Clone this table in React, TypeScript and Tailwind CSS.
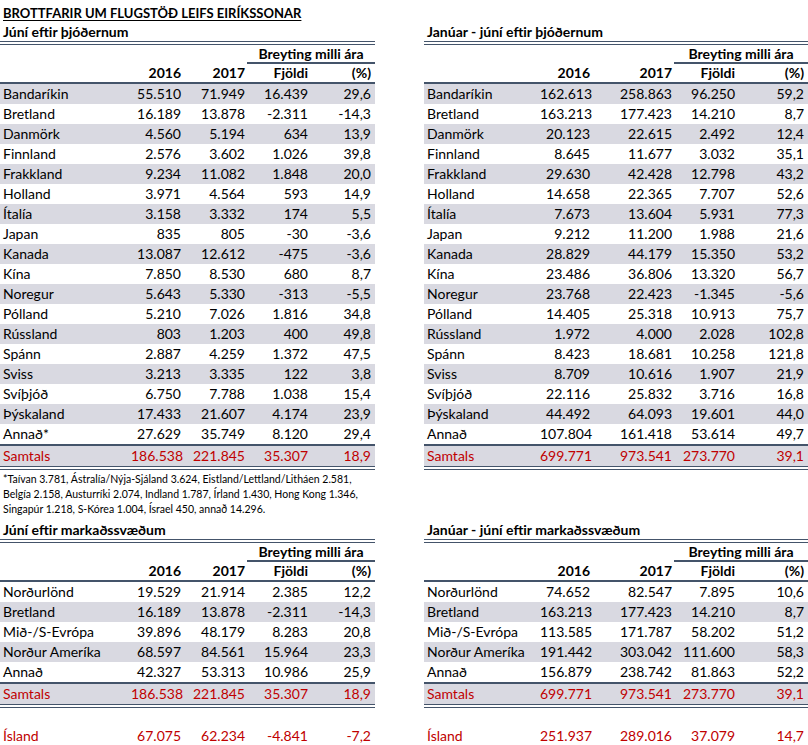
import React from "react";

type Row = [string, string, string, string, string];

type Cfg = {
  width: string;
  label: string;
  c1: string;
  c2: string;
  c3: string;
  c4: string;
  brey: string;
};

const LEFT: Cfg = {
  width: "w-[375px]",
  label: "w-[131px] pl-[3px]",
  c1: "w-[50px]",
  c2: "w-[64px]",
  c3: "w-[63px]",
  c4: "w-[63px]",
  brey: "ml-[247px] w-[128px]",
};

const RIGHT: Cfg = {
  width: "w-[384px]",
  label: "w-[116px] pl-[3px]",
  c1: "w-[50px]",
  c2: "w-[82px]",
  c3: "w-[63px]",
  c4: "w-[69px]",
  brey: "ml-[250px] w-[134px]",
};

const topLeft: Row[] = [
  ["Bandaríkin", "55.510", "71.949", "16.439", "29,6"],
  ["Bretland", "16.189", "13.878", "-2.311", "-14,3"],
  ["Danmörk", "4.560", "5.194", "634", "13,9"],
  ["Finnland", "2.576", "3.602", "1.026", "39,8"],
  ["Frakkland", "9.234", "11.082", "1.848", "20,0"],
  ["Holland", "3.971", "4.564", "593", "14,9"],
  ["Ítalía", "3.158", "3.332", "174", "5,5"],
  ["Japan", "835", "805", "-30", "-3,6"],
  ["Kanada", "13.087", "12.612", "-475", "-3,6"],
  ["Kína", "7.850", "8.530", "680", "8,7"],
  ["Noregur", "5.643", "5.330", "-313", "-5,5"],
  ["Pólland", "5.210", "7.026", "1.816", "34,8"],
  ["Rússland", "803", "1.203", "400", "49,8"],
  ["Spánn", "2.887", "4.259", "1.372", "47,5"],
  ["Sviss", "3.213", "3.335", "122", "3,8"],
  ["Svíþjóð", "6.750", "7.788", "1.038", "15,4"],
  ["Þýskaland", "17.433", "21.607", "4.174", "23,9"],
  ["Annað*", "27.629", "35.749", "8.120", "29,4"],
];

const topRight: Row[] = [
  ["Bandaríkin", "162.613", "258.863", "96.250", "59,2"],
  ["Bretland", "163.213", "177.423", "14.210", "8,7"],
  ["Danmörk", "20.123", "22.615", "2.492", "12,4"],
  ["Finnland", "8.645", "11.677", "3.032", "35,1"],
  ["Frakkland", "29.630", "42.428", "12.798", "43,2"],
  ["Holland", "14.658", "22.365", "7.707", "52,6"],
  ["Ítalía", "7.673", "13.604", "5.931", "77,3"],
  ["Japan", "9.212", "11.200", "1.988", "21,6"],
  ["Kanada", "28.829", "44.179", "15.350", "53,2"],
  ["Kína", "23.486", "36.806", "13.320", "56,7"],
  ["Noregur", "23.768", "22.423", "-1.345", "-5,6"],
  ["Pólland", "14.405", "25.318", "10.913", "75,7"],
  ["Rússland", "1.972", "4.000", "2.028", "102,8"],
  ["Spánn", "8.423", "18.681", "10.258", "121,8"],
  ["Sviss", "8.709", "10.616", "1.907", "21,9"],
  ["Svíþjóð", "22.116", "25.832", "3.716", "16,8"],
  ["Þýskaland", "44.492", "64.093", "19.601", "44,0"],
  ["Annað", "107.804", "161.418", "53.614", "49,7"],
];

const botLeft: Row[] = [
  ["Norðurlönd", "19.529", "21.914", "2.385", "12,2"],
  ["Bretland", "16.189", "13.878", "-2.311", "-14,3"],
  ["Mið-/S-Evrópa", "39.896", "48.179", "8.283", "20,8"],
  ["Norður Ameríka", "68.597", "84.561", "15.964", "23,3"],
  ["Annað", "42.327", "53.313", "10.986", "25,9"],
];

const botRight: Row[] = [
  ["Norðurlönd", "74.652", "82.547", "7.895", "10,6"],
  ["Bretland", "163.213", "177.423", "14.210", "8,7"],
  ["Mið-/S-Evrópa", "113.585", "171.787", "58.202", "51,2"],
  ["Norður Ameríka", "191.442", "303.042", "111.600", "58,3"],
  ["Annað", "156.879", "238.742", "81.863", "52,2"],
];

function DataRow({
  cfg,
  row,
  shaded,
  red,
  extra,
}: {
  cfg: Cfg;
  row: Row;
  shaded?: boolean;
  red?: boolean;
  extra?: string;
}) {
  return (
    <div
      className={`flex h-[20px] items-center leading-[20px] whitespace-nowrap ${
        shaded ? "bg-[#d9d9e1]" : ""
      } ${red ? "text-[#c00000]" : "text-black"} ${extra ?? ""}`}
    >
      <div className={cfg.label}>{row[0]}</div>
      <div className={`${cfg.c1} text-right`}>{row[1]}</div>
      <div className={`${cfg.c2} text-right`}>{row[2]}</div>
      <div className={`${cfg.c3} text-right`}>{row[3]}</div>
      <div className={`${cfg.c4} text-right`}>{row[4]}</div>
    </div>
  );
}

function DoubleLine() {
  return (
    <div className="flex flex-col gap-[2px]">
      <div className="h-px bg-[#44546a]" />
      <div className="h-px bg-[#44546a]" />
    </div>
  );
}

function Table({
  cfg,
  title,
  rows,
  total,
  shadeOdd,
}: {
  cfg: Cfg;
  title: string;
  rows: Row[];
  total: Row;
  shadeOdd: boolean;
}) {
  return (
    <div className={cfg.width}>
      <div className="h-[18px] pl-[3px] text-[14px] font-bold leading-[18px]">{title}</div>
      <DoubleLine />
      <div className="flex h-[19px] items-end">
        <div
          className={`${cfg.brey} h-[19px] border-b-2 border-[#44546a] text-center text-[14px] font-bold leading-[17px]`}
        >
          Breyting milli ára
        </div>
      </div>
      <div className="flex h-[20px] items-center border-b-2 border-[#44546a] text-[14px] font-bold leading-[18px]">
        <div className={cfg.label} />
        <div className={`${cfg.c1} text-right`}>2016</div>
        <div className={`${cfg.c2} text-right`}>2017</div>
        <div className={`${cfg.c3} text-right`}>Fjöldi</div>
        <div className={`${cfg.c4} text-right`}>(%)</div>
      </div>
      {rows.map((r, i) => (
        <DataRow key={i} cfg={cfg} row={r} shaded={shadeOdd ? i % 2 === 0 : i % 2 === 1} />
      ))}
      <div className="h-[2px] bg-[#44546a]" />
      <DataRow cfg={cfg} row={total} shaded red extra="h-[19px]" />
      <DoubleLine />
    </div>
  );
}

export default function App() {
  return (
    <div className="h-[745px] w-[808px] overflow-hidden bg-white text-[14px] text-black [font-family:Lato,'Noto_Sans',sans-serif]">
      <div className="h-[23px] pl-[3px] pt-[2px]">
        <span className="text-[13px] font-bold leading-[16px] underline underline-offset-2">
          BROTTFARIR UM FLUGSTÖÐ LEIFS EIRÍKSSONAR
        </span>
      </div>
      <div className="flex gap-[49px]">
        <div className="flex flex-col">
          <Table
            cfg={LEFT}
            title="Júní eftir þjóðernum"
            rows={topLeft}
            total={["Samtals", "186.538", "221.845", "35.307", "18,9"]}
            shadeOdd
          />
          <div className="h-[51px] pl-[3px] pt-[2px] text-[10.5px] leading-[15px]">
            *Taívan 3.781, Ástralía/Nýja-Sjáland 3.624, Eistland/Lettland/Litháen 2.581,
            <br />
            Belgía 2.158, Austurríki 2.074, Indland 1.787, Írland 1.430, Hong Kong 1.346,
            <br />
            Singapúr 1.218, S-Kórea 1.004, Ísrael 450, annað 14.296.
          </div>
        </div>
        <Table
          cfg={RIGHT}
          title="Janúar - júní eftir þjóðernum"
          rows={topRight}
          total={["Samtals", "699.771", "973.541", "273.770", "39,1"]}
          shadeOdd
        />
      </div>
      <div className="flex gap-[49px]">
        <div className="flex flex-col">
          <Table
            cfg={LEFT}
            title="Júní eftir markaðssvæðum"
            rows={botLeft}
            total={["Samtals", "186.538", "221.845", "35.307", "18,9"]}
            shadeOdd={false}
          />
          <div className="h-[18px]" />
          <DataRow cfg={LEFT} row={["Ísland", "67.075", "62.234", "-4.841", "-7,2"]} red />
        </div>
        <div className="flex flex-col">
          <Table
            cfg={RIGHT}
            title="Janúar - júní eftir markaðssvæðum"
            rows={botRight}
            total={["Samtals", "699.771", "973.541", "273.770", "39,1"]}
            shadeOdd={false}
          />
          <div className="h-[18px]" />
          <DataRow cfg={RIGHT} row={["Ísland", "251.937", "289.016", "37.079", "14,7"]} red />
        </div>
      </div>
    </div>
  );
}
